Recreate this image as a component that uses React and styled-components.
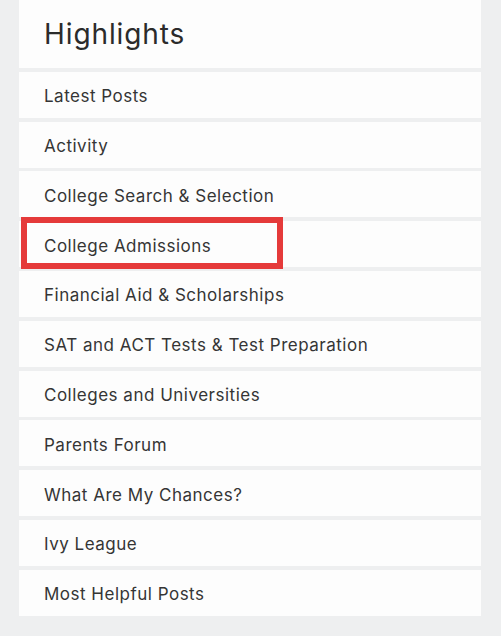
import React from "react";
import styled, { createGlobalStyle } from "styled-components";

const GlobalStyle = createGlobalStyle`
  body {
    margin: 0;
    background: #eeeff0;
    font-family: Inter, "Open Sans", sans-serif;
  }
`;

const Page = styled.div`
  width: 501px;
  height: 636px;
  padding: 0 20px 0 19px;
  box-sizing: border-box;
`;

const Panel = styled.div`
  display: flex;
  flex-direction: column;
  gap: 3.8px;
  position: relative;
`;

const Header = styled.div`
  height: 68px;
  background: #fdfdfd;
  display: flex;
  align-items: center;
  padding-left: 25px;
  font-size: 28px;
  color: #2b2b2b;
  letter-spacing: 0.9px;
`;

const Row = styled.div`
  height: 46px;
  background: #fdfdfd;
  display: flex;
  align-items: center;
  padding: 3px 0 0 25px;
  box-sizing: border-box;
  font-size: 17px;
  color: #353535;
  letter-spacing: 0.5px;
`;

const Marker = styled.div`
  position: absolute;
  left: 2px;
  top: 217px;
  width: 262px;
  height: 52px;
  box-sizing: border-box;
  border: 6px solid #e53a3a;
`;

const items = [
  "Latest Posts",
  "Activity",
  "College Search & Selection",
  "College Admissions",
  "Financial Aid & Scholarships",
  "SAT and ACT Tests & Test Preparation",
  "Colleges and Universities",
  "Parents Forum",
  "What Are My Chances?",
  "Ivy League",
  "Most Helpful Posts",
];

export default function App() {
  return (
    <>
      <GlobalStyle />
      <Page>
        <Panel>
          <Header>Highlights</Header>
          {items.map((item) => (
            <Row key={item}>{item}</Row>
          ))}
          <Marker />
        </Panel>
      </Page>
    </>
  );
}
